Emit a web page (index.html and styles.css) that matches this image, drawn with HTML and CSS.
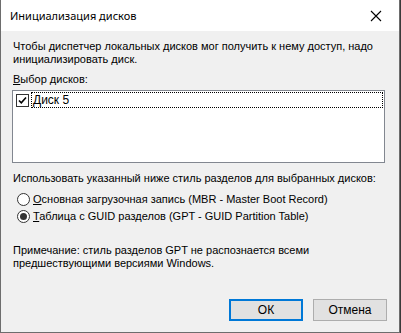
FILE: index.html
```html
<!DOCTYPE html>
<html lang="ru">
  <head>
    <meta charset="UTF-8">
    <title>Инициализация дисков</title>
    <link rel="stylesheet" href="styles.css">
  </head>
  <body>
    <div class="window">
      <div class="titlebar">
        <span class="title">Инициализация дисков</span>
        <button type="button" class="close" aria-label="Закрыть">
          <svg width="12" height="12" viewBox="0 0 12 12">
            <path d="M1 1 L11 11 M11 1 L1 11" stroke="#000" stroke-width="1.1" fill="none"/>
          </svg>
        </button>
      </div>

      <div class="content">
        <p class="intro">Чтобы диспетчер локальных дисков мог получить к нему доступ, надо инициализировать диск.</p>

        <p class="label"><u>В</u>ыбор дисков:</p>
        <div class="listbox">
          <div class="list-item">
            <span class="checkbox checked">
              <svg width="11" height="11" viewBox="0 0 11 11">
                <path d="M2 5.5 L4.3 7.8 L9 2.5" stroke="#000" stroke-width="1.6" fill="none"/>
              </svg>
            </span>
            <span class="item-text">Диск 5</span>
          </div>
        </div>

        <p class="style-label">Использовать указанный ниже стиль разделов для выбранных дисков:</p>
        <div class="radios">
          <label class="radio-row">
            <span class="radio"></span>
            <span><u>О</u>сновная загрузочная запись (MBR - Master Boot Record)</span>
          </label>
          <label class="radio-row">
            <span class="radio selected"></span>
            <span><u>Т</u>аблица с GUID разделов (GPT - GUID Partition Table)</span>
          </label>
        </div>

        <p class="note">Примечание: стиль разделов GPT не распознается всеми предшествующими версиями Windows.</p>

        <div class="buttons">
          <button type="button" class="btn default">ОК</button>
          <button type="button" class="btn">Отмена</button>
        </div>
      </div>
    </div>
  </body>
</html>
```

FILE: styles.css
```css
html, body {
  margin: 0;
  padding: 0;
}

body {
  width: 401px;
  height: 333px;
  background: #3a3a3a;
  font-family: "Liberation Sans", Arial, sans-serif;
  font-size: 11px;
  line-height: 13px;
  color: #000;
  overflow: hidden;
}

.window {
  width: 400px;
  height: 333px;
  box-sizing: border-box;
  border: 1px solid #6d6d6d;
  border-top: none;
  background: #f0f0f0;
  display: flex;
  flex-direction: column;
}

.titlebar {
  height: 31px;
  flex-shrink: 0;
  background: #fff;
  display: flex;
  align-items: center;
  justify-content: space-between;
  padding-left: 9px;
}

.title {
  font-family: "Noto Sans", sans-serif;
  font-size: 11px;
  color: #000;
  margin-top: -1px;
}

.close {
  width: 46px;
  height: 31px;
  border: none;
  background: none;
  padding: 0;
  display: flex;
  align-items: center;
  justify-content: center;
}

.content {
  flex: 1;
  padding: 9px 12px 0 11px;
  display: flex;
  flex-direction: column;
}

p {
  margin: 0;
}

.intro {
  padding-left: 1px;
}

.label {
  margin-top: 7px;
  padding-left: 1px;
}

.listbox {
  margin-top: 4px;
  height: 73px;
  width: 373px;
  box-sizing: border-box;
  border: 1px solid #828790;
  background: #fff;
  padding: 1px 1px 0 3px;
}

.list-item {
  display: flex;
  align-items: center;
  gap: 2px;
  height: 16px;
}

.checkbox {
  width: 13px;
  height: 13px;
  box-sizing: border-box;
  border: 1px solid #333;
  background: #fff;
  display: flex;
  align-items: center;
  justify-content: center;
  flex-shrink: 0;
}

.item-text {
  flex: 1;
  height: 16px;
  box-sizing: border-box;
  border: 1px dotted #000;
  padding: 1px 0 0 1px;
  font-size: 12px;
}

.style-label {
  margin-top: 9px;
  padding-left: 1px;
}

.radios {
  margin-top: 8px;
  padding-left: 5px;
  display: flex;
  flex-direction: column;
  gap: 4px;
}

.radio-row {
  display: flex;
  align-items: center;
  gap: 3px;
  height: 13px;
}

.radio {
  width: 13px;
  height: 13px;
  box-sizing: border-box;
  border: 1px solid #333;
  border-radius: 50%;
  background: #fff;
  display: flex;
  align-items: center;
  justify-content: center;
}

.radio.selected::after {
  content: "";
  width: 7px;
  height: 7px;
  border-radius: 50%;
  background: #333;
}

.note {
  margin-top: 21px;
  padding-left: 1px;
}

.buttons {
  margin-top: auto;
  margin-bottom: 11px;
  display: flex;
  justify-content: flex-end;
  gap: 10px;
}

.btn {
  width: 74px;
  height: 22px;
  box-sizing: border-box;
  border: 1px solid #adadad;
  background: #e1e1e1;
  font-family: "Liberation Sans", Arial, sans-serif;
  font-size: 12px;
  color: #000;
  padding: 0;
}

.btn.default {
  border: 2px solid #0078d7;
}
```
